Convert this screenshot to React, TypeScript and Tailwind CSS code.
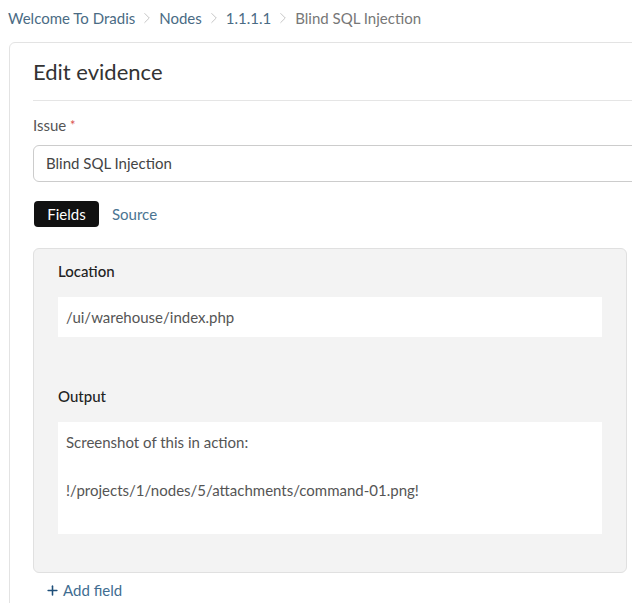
import { ChevronRight, Plus } from 'lucide-react';

const crumbs = ['Welcome To Dradis', 'Nodes', '1.1.1.1'];

const fields = [
  { label: 'Location', lines: ['/ui/warehouse/index.php'], tall: false },
  {
    label: 'Output',
    lines: ['Screenshot of this in action:', '', '!/projects/1/nodes/5/attachments/command-01.png!'],
    tall: true
  }
];

const App = () => {
  return (
    <div className="w-[632px] h-[603px] overflow-hidden bg-white text-[#333] font-['Lato','Liberation_Sans',sans-serif]">
      <nav className="flex items-center pl-2 pt-[8px] h-[28px] text-[15px] leading-5">
        {crumbs.map((c) => (
          <span key={c} className="flex items-center">
            <a href="#" className="text-[#4a6b84]">{c}</a>
            <ChevronRight className="mx-[3px] text-[#c4c4c4]" size={18} strokeWidth={1.3} />
          </span>
        ))}
        <span className="text-[#777]">Blind SQL Injection</span>
      </nav>

      <div className="mt-[14px] ml-[9px] w-[680px] border border-[#e3e3e3] rounded-tl-md pl-[23px] pt-[14px] pb-6">
        <h1 className="text-[22px] leading-[30px] text-[#333]">Edit evidence</h1>
        <hr className="mt-[13px] border-t border-[#e5e5e5]" />

        <label className="block mt-[14px] text-[15px] leading-5 text-[#555]">
          Issue <span className="text-[#d9534f] text-[13px] align-top">*</span>
        </label>
        <div className="mt-[10px] h-[37px] flex items-center px-3 border border-[#ccc] rounded-md text-[15px] text-[#444]">
          Blind SQL Injection
        </div>

        <div className="mt-[19px] flex items-center gap-[13px] text-[15px]">
          <span className="h-[26px] w-[65px] flex items-center justify-center rounded bg-[#111] text-white ml-px">Fields</span>
          <a href="#" className="text-[#4a7492]">Source</a>
        </div>

        <div className="mt-[21px] w-[594px] bg-[#f3f3f3] border border-[#e0e0e0] rounded-md px-6 pt-[12px] pb-[38px] flex flex-col">
          {fields.map((f, i) => (
            <div key={f.label} className={i > 0 ? 'mt-[49px]' : ''}>
              <div className="text-[15px] leading-5 text-[#222] font-medium">{f.label}</div>
              <div
                className={`mt-4 bg-white px-2 py-2 text-[15px] leading-6 text-[#555] ${f.tall ? 'h-[112px]' : 'h-10'}`}
              >
                {f.lines.map((l, j) => (
                  <div key={j} className="h-6">{l}</div>
                ))}
              </div>
            </div>
          ))}
        </div>

        <a href="#" className="mt-[7px] ml-3 flex items-center gap-[3px] text-[15px] leading-5 text-[#3f6d91]">
          <Plus size={15} strokeWidth={2.5} className="text-[#1f4f7a]" />
          Add field
        </a>
      </div>
    </div>
  );
};

export default App;
